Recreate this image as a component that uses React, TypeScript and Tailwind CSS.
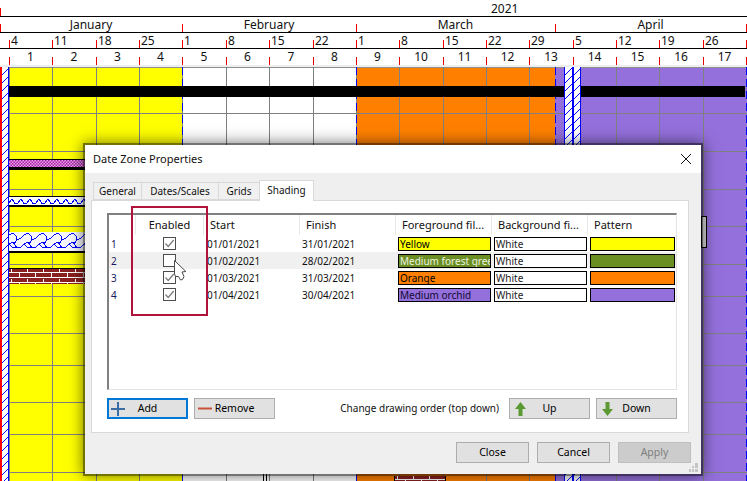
import React from "react";

const WEEK_LABELS = ["4", "11", "18", "25", "1", "8", "15", "22", "1", "8", "15", "22", "29", "5", "12", "19", "26"];
const MONTHS = ["January", "February", "March", "April"];
const ROW_HEIGHTS = ["h-[45px]", "h-[37px]", "h-[37px]", "h-[36px]", "h-[37px]", "h-[31px]", "h-[36px]", "h-[31px]", "h-[36px]", "h-[31px]", "h-[37px]", "h-[20px]"];

const ZONES = [
  { id: 1, start: "01/01/2021", finish: "31/01/2021", name: "Yellow", color: "bg-[#ffff00] text-black", pattern: "bg-[#ffff00]", on: true },
  { id: 2, start: "01/02/2021", finish: "28/02/2021", name: "Medium forest green", color: "bg-[#6b8e23] text-[#eef4e0]", pattern: "bg-[#6b8e23]", on: false },
  { id: 3, start: "01/03/2021", finish: "31/03/2021", name: "Orange", color: "bg-[#ff8000] text-black", pattern: "bg-[#ff8000]", on: true },
  { id: 4, start: "01/04/2021", finish: "30/04/2021", name: "Medium orchid", color: "bg-[#9370db] text-[#140a33]", pattern: "bg-[#9370db]", on: true },
];

const WEEK_GRID = "grid grid-cols-[9px_43px_44px_43px_43px_44px_43px_44px_43px_43px_44px_43px_43px_44px_43px_43px_44px_43px_1px]";

function Tick() {
  return <span className="absolute bottom-0 left-0 h-2 w-px bg-[#f00000]" />;
}

function Patterns() {
  return (
    <svg className="absolute h-0 w-0">
      <defs>
        <pattern id="hatch" width="8" height="8" patternUnits="userSpaceOnUse">
          <path d="M-1 9 L9 -1" stroke="#0000ff" strokeWidth="1" />
        </pattern>
        <pattern id="check" width="3" height="3" patternUnits="userSpaceOnUse">
          <rect width="3" height="3" fill="#e8a0e8" />
          <rect width="1.5" height="1.5" fill="#a820a8" />
          <rect x="1.5" y="1.5" width="1.5" height="1.5" fill="#a820a8" />
        </pattern>
        <pattern id="zig" width="9" height="9" patternUnits="userSpaceOnUse">
          <rect width="9" height="9" fill="#ffffff" />
          <path d="M0 6 L3 2 L5 5 L6 7 L9 6" fill="none" stroke="#0000ff" shapeRendering="crispEdges" />
        </pattern>
        <pattern id="scales" width="15" height="18" patternUnits="userSpaceOnUse">
          <rect width="15" height="18" fill="#f8f8fc" />
          <path d="M0 3 L4 1 L7 4 L8 8 L12 6 L15 3 M8 8 L5 12 L8 16 L12 15 L15 12 M0 12 L4 10 L5 12 M0 12 L3 15 L8 16" fill="none" stroke="#0000ff" shapeRendering="crispEdges" />
        </pattern>
        <pattern id="brick" width="16" height="10" patternUnits="userSpaceOnUse">
          <rect width="16" height="10" fill="#8b2020" />
          <rect y="3" width="16" height="1" fill="#ffffff" />
          <rect y="8" width="16" height="1" fill="#ffffff" />
          <rect x="2" width="1" height="3" fill="#ffffff" />
          <rect x="10" y="4" width="1" height="4" fill="#ffffff" />
        </pattern>
      </defs>
    </svg>
  );
}

function PatternFill({ id }: { id: string }) {
  return (
    <svg className="block h-full w-full">
      <rect width="100%" height="100%" fill={`url(#${id})`} />
    </svg>
  );
}

function TimeHeader() {
  return (
    <div className="text-[12px] leading-[16px] text-[#111]">
      <div className="relative h-[17px] border-b border-black pl-[491px] leading-[17px]">
        <Tick />
        2021
      </div>
      <div className="grid h-[16px] grid-cols-[182px_174px_199px_191px_1px] border-b border-black">
        {MONTHS.map((m) => (
          <div key={m} className="relative text-center leading-[15px]">
            <Tick />
            {m}
          </div>
        ))}
        <div className="relative">
          <Tick />
        </div>
      </div>
      <div className={`${WEEK_GRID} h-[16px] border-b border-black`}>
        <div />
        {WEEK_LABELS.map((w, i) => (
          <div key={i} className="relative pl-[2px] leading-[15px]">
            <Tick />
            {w}
          </div>
        ))}
        <div className="relative">
          <Tick />
        </div>
      </div>
      <div className={`${WEEK_GRID} h-[16px]`}>
        <div />
        {WEEK_LABELS.map((_, i) => (
          <div key={i} className="relative text-center leading-[15px]">
            <Tick />
            {i + 1}
          </div>
        ))}
        <div className="relative">
          <Tick />
        </div>
      </div>
      <div className="h-[2px] bg-[#eeeeee]" />
    </div>
  );
}

function Chart() {
  return (
    <div className="relative h-[414px] overflow-hidden">
      {/* month shading */}
      <div className="flex h-full">
        <div className="w-[9px]" />
        <div className="w-[173px] bg-[#ffff00]" />
        <div className="w-[174px] bg-white" />
        <div className="w-[199px] bg-[#ff8000]" />
        <div className="w-[192px] bg-[#9370db]" />
      </div>

      {/* grid lines */}
      <div className="absolute inset-0 border-t border-[#909090]">
        {ROW_HEIGHTS.map((h, i) => (
          <div key={i} className={`${h} box-content border-b border-[#808080]`} />
        ))}
      </div>
      <div className={`${WEEK_GRID} absolute inset-0`}>
        <div />
        {WEEK_LABELS.map((_, i) => (
          <div key={i} className="border-l border-[#808080]" />
        ))}
      </div>
      <div className="absolute bottom-0 left-[182px] top-0 w-px bg-[repeating-linear-gradient(180deg,#0000ff_0_8px,transparent_8px_12px)]" />
      <div className="absolute bottom-0 left-[356px] top-0 w-px bg-[repeating-linear-gradient(180deg,#0000ff_0_8px,transparent_8px_12px)]" />
      <div className="absolute bottom-0 left-[555px] top-0 w-px bg-[repeating-linear-gradient(180deg,#0000ff_0_8px,transparent_8px_12px)]" />
      <div className="absolute bottom-0 left-[746px] top-0 w-px bg-[repeating-linear-gradient(180deg,#0000ff_0_8px,transparent_8px_12px)]" />

      {/* non working strips */}
      <div className="absolute bottom-0 left-0 top-0 w-[9px] border-l-2 border-r border-l-[#ff0000] border-r-[#0000ff] bg-white">
        <PatternFill id="hatch" />
      </div>
      <div className="absolute bottom-0 left-[564px] top-0 w-[9px] border-x border-[#0000ff] bg-white">
        <PatternFill id="hatch" />
      </div>
      <div className="absolute bottom-0 left-[573px] top-0 w-[8px] border-x border-[#0000ff] bg-white">
        <PatternFill id="hatch" />
      </div>

      {/* bars */}
      <div className="absolute left-[9px] top-[19px] h-[11px] w-[555px] bg-black" />
      <div className="absolute left-[581px] top-[19px] h-[11px] w-[164px] bg-black" />
      <div className="absolute left-[9px] top-[92px] h-[11px] w-[120px] border-b-[3px] border-t border-black">
        <PatternFill id="check" />
      </div>
      <div className="absolute left-[9px] top-[129px] h-[11px] w-[120px] border-b-2 border-t border-black">
        <PatternFill id="zig" />
      </div>
      <div className="absolute left-[9px] top-[165px] h-[21px] w-[120px] border-b-2 border-black">
        <PatternFill id="scales" />
      </div>
      <div className="absolute left-[9px] top-[201px] h-[16px] w-[120px] border-t border-black">
        <PatternFill id="brick" />
      </div>
      <div className="absolute left-[394px] top-[409px] h-[8px] w-[52px] border-x border-black">
        <PatternFill id="brick" />
      </div>
      <div className="absolute left-[701px] top-[149px] h-[32px] w-[6px] border border-black bg-[#d8d8d8]" />
      <div className="absolute left-[263px] top-[405px] h-[9px] w-[4px] border-x border-black" />
    </div>
  );
}

function Btn({
  label,
  w = "w-[73px]",
  focus,
  disabled,
  icon,
}: {
  label: string;
  w?: string;
  focus?: boolean;
  disabled?: boolean;
  icon?: React.ReactNode;
}) {
  return (
    <button
      type="button"
      className={`relative flex h-[21px] items-center justify-center text-[10.5px] ${w} ${
        focus
          ? "border-2 border-[#0078d7] bg-[#e1e1e1] text-black"
          : disabled
            ? "border border-[#bfbfbf] bg-[#cccccc] text-[#7f7f7f]"
            : "border border-[#adadad] bg-[#e1e1e1] text-black"
      }`}
    >
      {icon}
      {label}
    </button>
  );
}

function CheckBox({ on }: { on: boolean }) {
  return (
    <div className="flex h-[13px] w-[13px] items-center justify-center border border-[#4d4d4d] bg-white">
      {on && (
        <svg width="11" height="11" viewBox="0 0 11 11">
          <path d="M1.5 5.5 L4.2 8.5 L9.7 2" fill="none" stroke="#7a7a7a" strokeWidth="1.2" />
        </svg>
      )}
    </div>
  );
}

function ZoneTable() {
  return (
    <div className="h-[177px] w-[570px] border-b border-l-2 border-r border-t-2 border-b-[#e3e3e3] border-l-[#808080] border-r-[#e3e3e3] border-t-[#808080] bg-white text-[10px] text-[#111]">
      <div className="grid h-[20px] grid-cols-[26px_68px_96px_96px_96px_96px_86px] items-center whitespace-nowrap text-[11px] leading-[20px]">
        <div />
        <div className="border-l border-[#e8e8e8] text-center">Enabled</div>
        <div className="border-l border-[#e8e8e8] pl-[6px]">Start</div>
        <div className="border-l border-[#e8e8e8] pl-[6px]">Finish</div>
        <div className="overflow-hidden border-l border-[#e8e8e8] pl-[6px]">Foreground fil...</div>
        <div className="overflow-hidden border-l border-[#e8e8e8] pl-[6px]">Background fi...</div>
        <div className="border-l border-[#e8e8e8] pl-[6px]">Pattern</div>
      </div>
      {ZONES.map((z) => (
        <div
          key={z.id}
          className={`grid h-[17px] grid-cols-[26px_68px_96px_96px_96px_96px_86px] items-center leading-[16px] ${
            z.id === 2 ? "bg-[#f0f0f0]" : ""
          }`}
        >
          <div className="pl-[2px] text-[#1a1a5e]">{z.id}</div>
          <div className="flex justify-center">
            <CheckBox on={z.on} />
          </div>
          <div className="pl-[4px]">{z.start}</div>
          <div className="pl-[3px]">{z.finish}</div>
          <div className={`ml-[3px] h-[14px] w-[93px] overflow-hidden whitespace-nowrap border border-black pl-[1px] leading-[12px] ${z.color}`}>
            {z.name}
          </div>
          <div className="ml-[3px] h-[14px] w-[93px] border border-black bg-white pl-[1px] leading-[12px] text-[#222]">White</div>
          <div className={`ml-[3px] h-[14px] w-[85px] border border-black ${z.pattern}`} />
        </div>
      ))}
    </div>
  );
}

function Dialog() {
  return (
    <div className="absolute left-[83px] top-[143px] h-[333px] w-[620px] bg-black/55 p-[2px] shadow-[0_0_14px_rgba(0,0,0,0.55)]">
      <div className="flex h-full flex-col bg-[#efefef] text-[10px] text-[#111]">
        <div className="flex h-[28px] items-center justify-between bg-white pl-[8px] pr-[9px] text-[11px]">
          <span>Date Zone Properties</span>
          <svg width="12" height="12" viewBox="0 0 12 12">
            <path d="M1 1 L11 11 M11 1 L1 11" stroke="#111" strokeWidth="1" />
          </svg>
        </div>

        <div className="flex h-[27px] items-end pl-[8px]">
          <div className="flex h-[18px] w-[48px] items-center justify-center border-y border-l border-[#d9d9d9] bg-[#f0f0f0]">General</div>
          <div className="flex h-[18px] w-[77px] items-center justify-center border-y border-l border-[#d9d9d9] bg-[#f0f0f0]">Dates/Scales</div>
          <div className="flex h-[18px] w-[41px] items-center justify-center border-y border-l border-[#d9d9d9] bg-[#f0f0f0]">Grids</div>
          <div className="z-10 -mb-px flex h-[21px] w-[55px] items-center justify-center border-x border-t border-[#d9d9d9] bg-white pb-[2px]">Shading</div>
        </div>

        <div className="ml-[6px] h-[233px] w-[598px] border border-[#d9d9d9] bg-white pl-[15px] pt-[12px]">
          <ZoneTable />
          <div className="mt-2 flex w-[570px] items-center">
            <Btn
              label="Add"
              w="w-[81px]"
              focus
              icon={
                <svg className="absolute left-[2px] top-[2px]" width="14" height="14" viewBox="0 0 14 14">
                  <path d="M0 7 H14 M7 0 V14" stroke="#3a6ea5" strokeWidth="2" />
                </svg>
              }
            />
            <div className="ml-[6px]">
              <Btn
                label="Remove"
                w="w-[81px]"
                icon={
                  <svg className="absolute left-[3px] top-[8px]" width="14" height="3" viewBox="0 0 14 3">
                    <path d="M0 1.5 H14" stroke="#c8503a" strokeWidth="2" />
                  </svg>
                }
              />
            </div>
            <span className="ml-auto mr-[10px]">Change drawing order (top down)</span>
            <Btn
              label="Up"
              w="w-[81px]"
              icon={
                <svg className="absolute left-[5px] top-[3px]" width="11" height="14" viewBox="0 0 11 14">
                  <path d="M5.5 0 L11 7 H7.5 V14 H3.5 V7 H0 Z" fill="#5b9a32" />
                </svg>
              }
            />
            <div className="ml-[6px]">
              <Btn
                label="Down"
                w="w-[81px]"
                icon={
                  <svg className="absolute left-[5px] top-[3px]" width="11" height="14" viewBox="0 0 11 14">
                    <path d="M5.5 14 L11 7 H7.5 V0 H3.5 V7 H0 Z" fill="#5b9a32" />
                  </svg>
                }
              />
            </div>
          </div>
        </div>

        <div className="mt-[9px] flex justify-end gap-2 pr-[10px]">
          <Btn label="Close" />
          <Btn label="Cancel" />
          <Btn label="Apply" disabled />
        </div>

        <svg className="absolute bottom-[4px] right-[5px]" width="9" height="9" viewBox="0 0 9 9">
          <path d="M6 0 h3 v3 h-3 Z M3 3 h2 v2 h-2 Z M6 3 h3 v2 h-3 Z M0 6 h2 v3 h-2 Z M3 6 h2 v3 h-2 Z M6 6 h3 v3 h-3 Z" fill="#c4c4c4" />
        </svg>
      </div>
    </div>
  );
}

export default function App() {
  return (
    <div className="relative h-[481px] w-[747px] overflow-hidden bg-white font-['Noto_Sans',sans-serif]">
      <Patterns />
      <TimeHeader />
      <Chart />
      <Dialog />

      {/* callout around the Enabled column */}
      <div className="absolute left-[131px] top-[206px] h-[110px] w-[77px] border-2 border-[#b0123b]" />

      {/* mouse pointer */}
      <svg className="absolute left-[174px] top-[260px]" width="13" height="21" viewBox="0 0 13 21">
        <path d="M0.5 0.5 L11.8 11.5 L8 12 L10 16.5 L8.5 19.5 L6.5 20 L4.5 16.5 L1.5 16.5 L0.5 14 Z" fill="#ffffff" stroke="#4a4a4a" strokeWidth="1" />
      </svg>
    </div>
  );
}
